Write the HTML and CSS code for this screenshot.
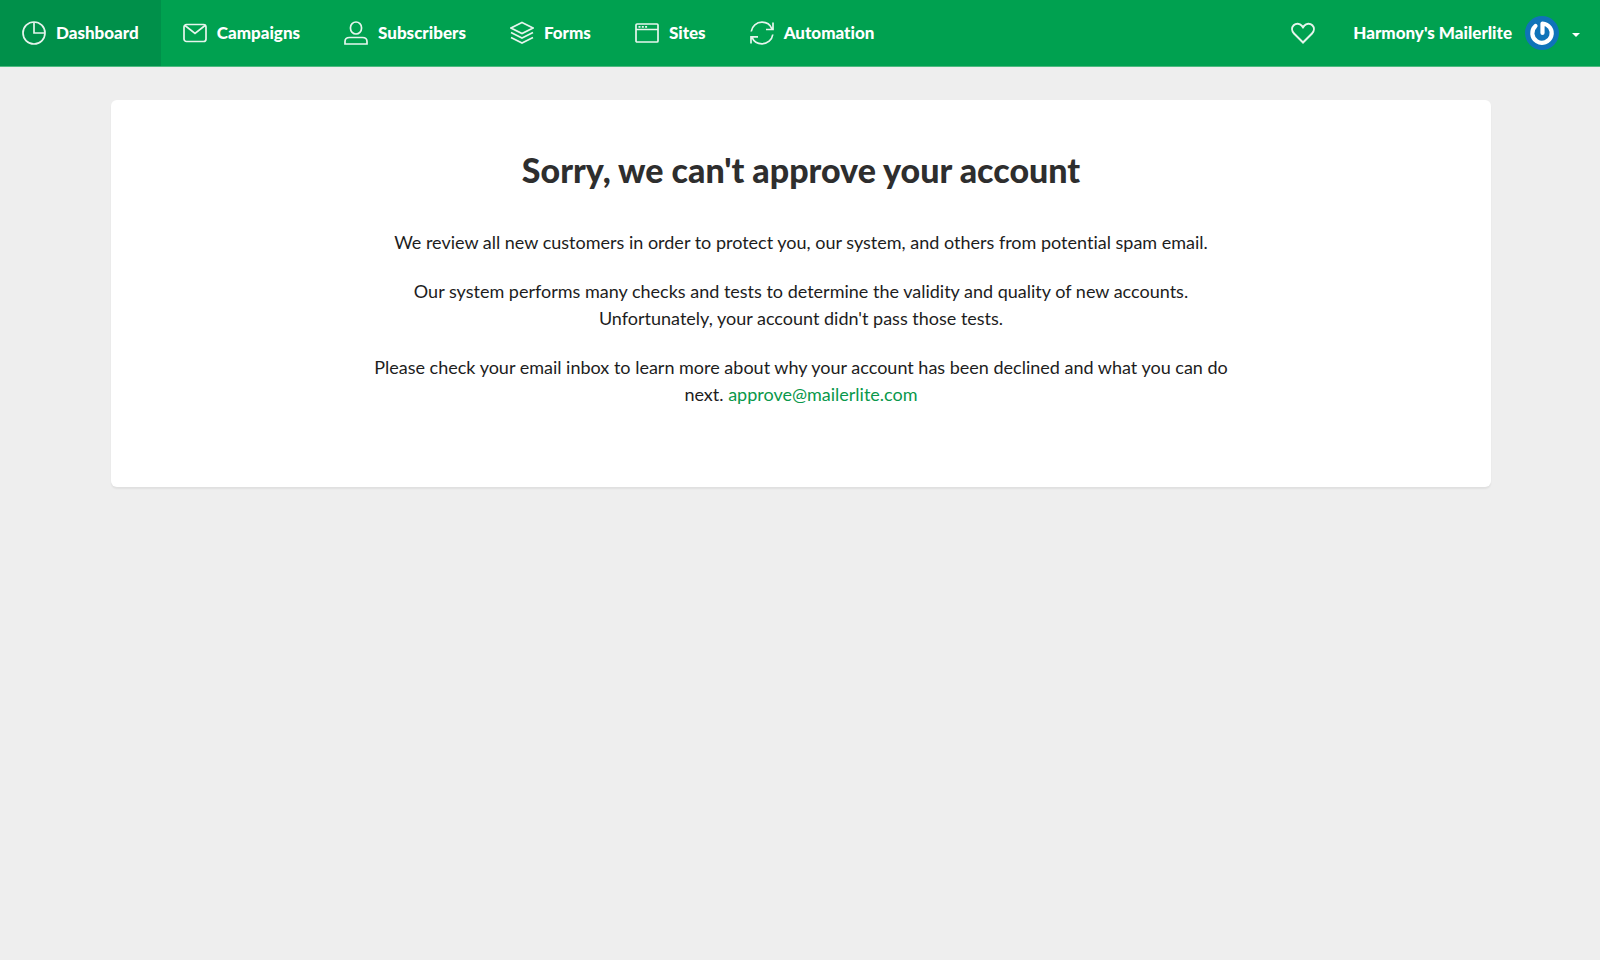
FILE: index.html
```
<!DOCTYPE html>
<html lang="en">

<head>
  <meta charset="UTF-8">
  <meta name="viewport" content="width=device-width, initial-scale=1.0">
  <title>Dashboard</title>
  <link rel="stylesheet" href="styles.css">
</head>

<body>
  <header class="header">
    <nav class="nav">
      <a class="nav-item active" href="#">
        <svg class="icon" viewBox="0 0 24 24"><circle cx="12" cy="12" r="11"/><path d="M12 1v11h11"/></svg>
        Dashboard
      </a>
      <a class="nav-item" href="#">
        <svg class="icon" viewBox="0 0 24 24"><rect x="1" y="3.500" width="22" height="17" rx="2.500"/><path d="M2 4.500l10 8 10-8"/></svg>
        Campaigns
      </a>
      <a class="nav-item" href="#">
        <svg class="icon" viewBox="0 0 24 24"><rect x="6.500" y="1" width="11" height="12" rx="5.500"/><path d="M1 23v-2.500c0-2.500 2-4 4.500-4h13c2.500 0 4.500 1.500 4.500 4V23z"/></svg>
        Subscribers
      </a>
      <a class="nav-item" href="#">
        <svg class="icon" viewBox="0 0 24 24"><path d="M12 1.500l11 5.500-11 5.500-11-5.500zM1 11.500l11 5.500 11-5.500M1 16.500l11 5.500 11-5.500"/></svg>
        Forms
      </a>
      <a class="nav-item" href="#">
        <svg class="icon" viewBox="0 0 24 24"><rect x="1" y="3" width="22" height="18" rx="1"/><path d="M1 8.500h22M3.500 5.800h2M6.800 5.800h2M10.100 5.800h2"/></svg>
        Sites
      </a>
      <a class="nav-item" href="#">
        <svg class="icon" viewBox="0 0 24 24"><path d="M1.200 10.500C2 5 6.500 1.200 12 1.200c4.500 0 8.300 2.600 10 6.800M23 1.500V8.500h-7M22.800 13.500C22 19 17.500 22.800 12 22.800c-4.500 0-8.300-2.600-10-6.500M1 22.500V15.800h7"/></svg>
        Automation
      </a>
    </nav>
    <div class="account">
      <button class="heart" type="button" aria-label="Favorites">
        <svg class="icon" viewBox="0 0 24 24"><path d="M12 21.500L3 12.500C.6 10 .5 6.500 2.700 4.300c2.300-2.300 6-2.100 8 .3L12 6.300l1.300-1.700c2-2.400 5.700-2.600 8-.3 2.200 2.200 2.100 5.700-.3 8.200z"/></svg>
      </button>
      <button class="user" type="button">
        Harmony's Mailerlite
        <svg class="avatar" viewBox="0 0 34 34"><circle class="avatar-bg" cx="17" cy="17" r="17"/><path class="avatar-mark" d="M10.500 10a9.700 9.700 0 1 0 7-2.500V17"/></svg>
        <span class="caret"></span>
      </button>
    </div>
  </header>

  <main class="container">
    <section class="card">
      <h1>Sorry, we can't approve your account</h1>
      <p>We review all new customers in order to protect you, our system, and others from potential spam email.</p>
      <p>Our system performs many checks and tests to determine the validity and quality of new accounts. Unfortunately, your account didn't pass those tests.</p>
      <p>Please check your email inbox to learn more about why your account has been declined and what you can do next. <a href="mailto:approve@mailerlite.com">approve@mailerlite.com</a></p>
    </section>
  </main>
</body>

</html>
```

FILE: styles.css
```
* {
  box-sizing: border-box;
}
body {
  margin: 0;
  background-color: #eee;
  color: #1d1d1d;
  font-family: "Lato", sans-serif;
  font-size: 18px;
  font-variant-ligatures: none;
  line-height: 27px;
}
.header {
  display: flex;
  justify-content: space-between;
  height: 67px;
  background-color: #00a150;
  border-bottom: 1px solid #4dba80;
}
.nav,
.account {
  display: flex;
}
.nav-item,
.user {
  display: flex;
  align-items: center;
  gap: 10px;
  padding: 0 22px;
  color: #fff;
  font-family: inherit;
  font-size: 17px;
  font-weight: 900;
  line-height: 24px;
  text-decoration: none;
  white-space: nowrap;
}
.nav-item.active {
  background-color: #00904a;
}
.heart,
.user {
  background: none;
  border: 0;
  cursor: pointer;
}
.heart {
  display: flex;
  align-items: center;
  padding: 0 16px;
}
.user {
  gap: 13px;
  padding-right: 20px;
}
.icon {
  width: 24px;
  height: 24px;
  fill: none;
  stroke: #fff;
  stroke-width: 1.7;
  opacity: .9;
}
.heart .icon {
  stroke-width: 2;
}
.avatar {
  width: 34px;
  height: 34px;
}
.avatar-bg {
  fill: #0f73b9;
}
.avatar-mark {
  fill: none;
  stroke: #fff;
  stroke-width: 4.2;
  stroke-linecap: round;
  stroke-linejoin: round;
}
.caret {
  margin-top: 4px;
  border: 4px solid transparent;
  border-top-color: #fff;
  border-bottom: 0;
}
.container {
  padding: 33px 109px 33px 111px;
}
.card {
  padding: 49px 20px 57px;
  background-color: #fff;
  border-radius: 6px;
  box-shadow: 0 2px 2px rgba(0, 0, 0, .06);
  text-align: center;
}
.card h1 {
  margin: 0 0 38px;
  color: #2e2e2e;
  font-size: 34px;
  font-weight: 900;
  line-height: 42px;
}
.card p {
  max-width: 866px;
  margin: 0 auto 22px;
}
.card a {
  color: #09984b;
  text-decoration: none;
}
```
